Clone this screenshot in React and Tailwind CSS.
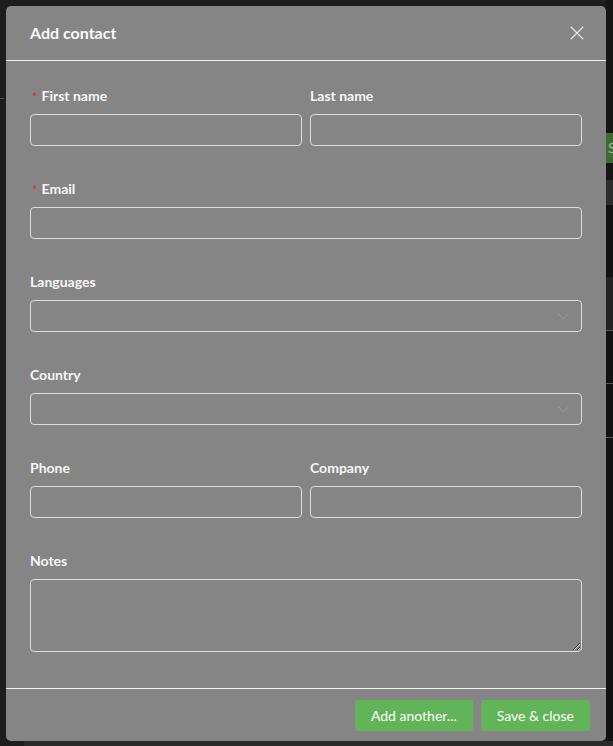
import { X, ChevronDown } from 'lucide-react';

function Label({ children, required }) {
  return (
    <label className="flex items-center h-5 text-[14px] font-bold text-[#f7f7f7] leading-5">
      {required && <span className="text-[#e0343c] text-[13px] mr-[4px] ml-[2px] mt-[2px]">*</span>}
      {children}
    </label>
  );
}

function Input() {
  return <div className="mt-2 h-8 rounded-[4px] border border-[#dcdcdc]" />;
}

function Select() {
  return (
    <div className="mt-2 h-8 rounded-[4px] border border-[#dcdcdc] flex items-center justify-end pr-[8px]">
      <ChevronDown className="w-[19px] h-[19px] text-[#a6a6a6]" strokeWidth={1} />
    </div>
  );
}

export default function App() {
  return (
    <div className="w-[613px] h-[746px] bg-[#1d1d1d] flex flex-col overflow-hidden" style={{ fontFamily: 'Lato, "Open Sans", sans-serif' }}>
      <div className="flex flex-1 min-h-0">
        <div className="w-[6px] shrink-0 flex flex-col overflow-hidden">
          <div className="h-[92px]" />
          <div className="text-[#9a9a9a] text-[8px] leading-none">..</div>
        </div>
        <div className="w-[600px] shrink-0 mt-[6px] h-[735px] bg-[#858585] rounded-[5px] flex flex-col">
          {/* header */}
          <div className="h-[55px] border-b border-[#f2f2f2] flex items-center justify-between pl-6 pr-[17px]">
            <h2 className="text-[16px] font-bold text-[#fafafa]">Add contact</h2>
            <X className="w-6 h-6 text-[#ececec]" strokeWidth={1.1} />
          </div>

          {/* body */}
          <div className="flex-1 px-6 pt-[25px] flex flex-col gap-[33px]">
            <div className="grid grid-cols-2 gap-2">
              <div>
                <Label required>First name</Label>
                <Input />
              </div>
              <div>
                <Label>Last name</Label>
                <Input />
              </div>
            </div>
            <div>
              <Label required>Email</Label>
              <Input />
            </div>
            <div>
              <Label>Languages</Label>
              <Select />
            </div>
            <div>
              <Label>Country</Label>
              <Select />
            </div>
            <div className="grid grid-cols-2 gap-2">
              <div>
                <Label>Phone</Label>
                <Input />
              </div>
              <div>
                <Label>Company</Label>
                <Input />
              </div>
            </div>
            <div>
              <Label>Notes</Label>
              <textarea className="mt-2 block w-full h-[73px] rounded-[4px] border border-[#dcdcdc] bg-transparent outline-none" />
            </div>
          </div>

          {/* footer */}
          <div className="h-[53px] border-t border-[#f2f2f2] flex items-center justify-end gap-2 pr-4">
            <button className="h-[31px] px-4 rounded-[3px] bg-[#62b458] text-[14px] text-white">Add another...</button>
            <button className="h-[31px] px-4 rounded-[3px] bg-[#62b458] text-[14px] text-white">Save &amp; close</button>
          </div>
        </div>
        <div className="flex-1 min-w-0 flex flex-col overflow-hidden">
          <div className="h-[133px] bg-[#151515]" />
          <div className="h-[30px] bg-[#3b6b33] text-[#9fbf98] text-[14px] leading-[30px] overflow-hidden pl-[2px]">S</div>
          <div className="h-[17px] bg-[#151515]" />
          <div className="h-[25px] bg-[#2c2c2c]" />
          <div className="h-[72px] bg-[#121212]" />
          <div className="h-[53px] bg-[#232323]" />
          <div className="h-[53px] bg-[#121212] border-t border-[#555]" />
          <div className="h-[54px] bg-[#121212] border-t border-[#555]" />
          <div className="flex-1 bg-[#121212] border-t border-[#555]" />
        </div>
      </div>
      <div className="h-[5px] shrink-0 flex">
        <div className="w-6 bg-[#1d1d1d]" />
        <div className="flex-1 bg-[#2a2a2a]" />
      </div>
    </div>
  );
}
